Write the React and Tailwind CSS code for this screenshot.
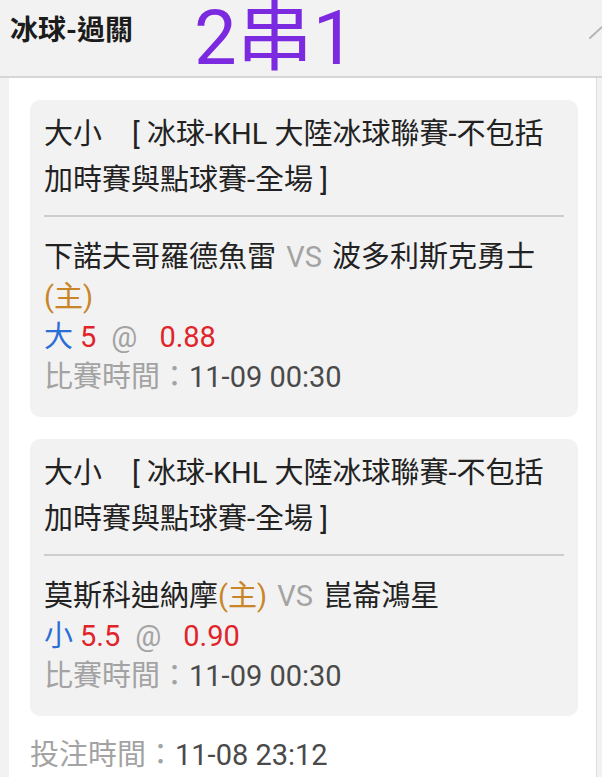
const bets = [
    {
        market: '大小',
        league: ['[ 冰球-KHL 大陸冰球聯賽-不包括', '加時賽與點球賽-全場 ]'],
        home: '下諾夫哥羅德魚雷',
        away: '波多利斯克勇士',
        homeMark: 'away',
        pick: '大',
        line: '5',
        odds: '0.88',
        time: '11-09 00:30',
    },
    {
        market: '大小',
        league: ['[ 冰球-KHL 大陸冰球聯賽-不包括', '加時賽與點球賽-全場 ]'],
        home: '莫斯科迪納摩',
        away: '崑崙鴻星',
        homeMark: 'home',
        pick: '小',
        line: '5.5',
        odds: '0.90',
        time: '11-09 00:30',
    },
];

const Mark = () => <span className="text-[#c98527]">(主)</span>;

const BetCard = ({ bet }) => (
    <div className="bg-[#f2f2f2] rounded-[10px] px-[14px] pt-[11px] pb-[20px]">
        <div className="text-[29px] leading-[46px] text-[#222]">
            {bet.market}
            <span className="ml-[30px]">{bet.league[0]}</span>
            <br />
            {bet.league[1]}
        </div>
        <div className="h-[2px] bg-[#cdcdcd] mt-[12px]"></div>
        <div className="mt-[20px] text-[29px] leading-[40px]">
            <div className="text-[#222]">
                {bet.home}
                {bet.homeMark === 'home' && <Mark />}
                <span className="text-[#a3a3a3] mx-[3px]"> VS </span>
                {bet.away}
                {bet.homeMark === 'away' && <Mark />}
            </div>
            <div>
                <span className="text-[#2b6fd6]">{bet.pick}</span>
                <span className="text-[#e0242a] ml-[7px]">{bet.line}</span>
                <span className="text-[#a3a3a3] ml-[15px]">@</span>
                <span className="text-[#e0242a] ml-[22px]">{bet.odds}</span>
            </div>
            <div>
                <span className="text-[#a3a3a3]">比賽時間：</span>
                <span className="text-[#4a4a4a]">{bet.time}</span>
            </div>
        </div>
    </div>
);

export default function App() {
    return (
        <div className="min-h-screen w-[602px] bg-[#f2f2f2] font-[Roboto,'Noto_Sans_CJK_TC',sans-serif] overflow-hidden">
            {/* Header */}
            <div className="relative h-[78px] border-b-2 border-[#d6d6d6] flex items-start">
                <h1 className="ml-[10px] mt-[17px] text-[28px] leading-none font-bold text-[#1c1c1c]">冰球-過關</h1>
                <span className="absolute left-[194px] top-0 text-[76px] leading-[76px] text-[#7b2ae0]">2串1</span>
                <svg className="absolute left-[589px] top-[25px]" width="14" height="15" viewBox="0 0 14 15">
                    <path d="M1 13 L13 2" stroke="#b5b5b5" strokeWidth="2" strokeLinecap="round" fill="none" />
                </svg>
            </div>

            {/* Panel */}
            <div className="ml-[9px] mr-[5px] bg-white border-r border-[#dcdcdc] pl-[21px] pr-[18px] pt-[22px] pb-[40px] min-h-[700px]">
                <div className="flex flex-col gap-[22px]">
                    {bets.map((b, i) => (
                        <BetCard key={i} bet={b} />
                    ))}
                </div>
                <div className="mt-[19px] text-[29px] leading-[40px]">
                    <span className="text-[#a3a3a3]">投注時間：</span>
                    <span className="text-[#4a4a4a]">11-08 23:12</span>
                </div>
            </div>
        </div>
    );
}
